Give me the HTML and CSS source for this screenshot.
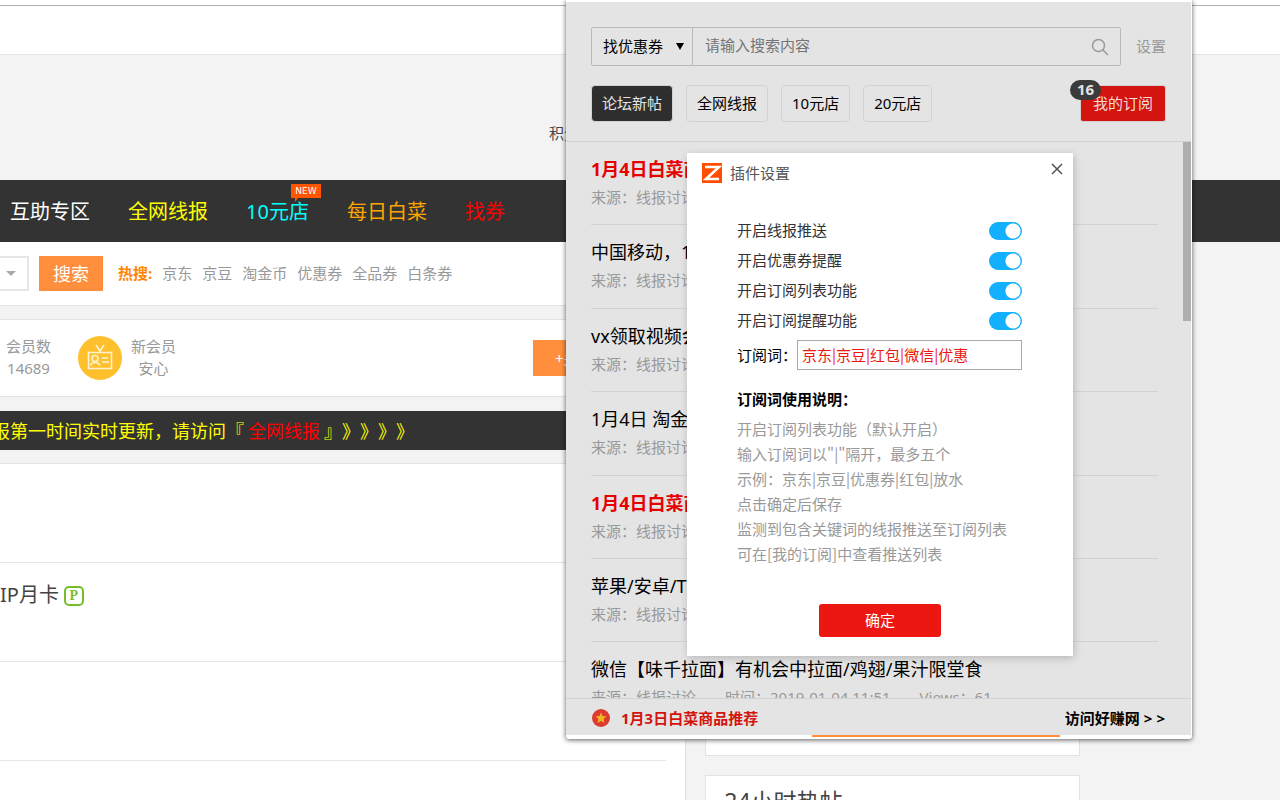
FILE: index.html
```html
<!DOCTYPE html>
<html lang="zh-CN">
<head>
<meta charset="utf-8">
<meta name="viewport" content="width=device-width, initial-scale=1">
<title>插件设置</title>
<link rel="stylesheet" href="styles.css">
</head>
<body>
<div class="page">
  <div class="topbar"></div>
  <header class="masthead"><span class="points">积分</span></header>
  <nav class="nav">
    <a href="#">互助专区</a>
    <a href="#" class="yellow">全网线报</a>
    <a href="#" class="cyan">10元店<span class="new"><svg viewBox="0 0 30 18" aria-hidden="true"><path d="M0 0h30v14H7l-3 4V14H0z" fill="#ff5400"/></svg><b>NEW</b></span></a>
    <a href="#" class="orange">每日白菜</a>
    <a href="#" class="red">找券</a>
  </nav>
  <section class="search-row">
    <button class="type-drop" aria-label="搜索类型"><svg viewBox="0 0 10 5" aria-hidden="true"><path d="M0 0h10L5 5z" fill="#aaa"/></svg></button>
    <button class="search-btn">搜索</button>
    <div class="hot"><b>热搜:</b><a href="#">京东</a><a href="#">京豆</a><a href="#">淘金币</a><a href="#">优惠券</a><a href="#">全品券</a><a href="#">白条券</a></div>
  </section>
  <section class="stats">
    <div class="stat"><span>会员数</span><span>14689</span></div>
    <svg class="card-icon" viewBox="0 0 44 44" aria-hidden="true"><circle cx="22" cy="22" r="22" fill="#ffc02e"/><g fill="none" stroke="#fff3cf" stroke-width="1.6"><path d="M18 9l4 6 4-6M10.500 16.500h23v16h-23z"/><circle cx="17" cy="22.500" r="3"/><path d="M12.500 29.500c1-4 8-4 9.500 0M24 22h6M24 26h7"/></g></svg>
    <div class="stat"><span>新会员</span><span>安心</span></div>
    <button class="follow">+关注</button>
  </section>
  <section class="banner">报第一时间实时更新，请访问『 <a href="#">全网线报</a> 』》》》》</section>
  <div class="columns">
    <main class="posts">
      <div class="post"></div>
      <div class="post"><a href="#">IP月卡</a><span class="p-mark">P</span></div>
      <div class="post"></div>
    </main>
    <aside class="side">
      <div class="box first"></div>
      <div class="box"><h2>24小时热帖</h2></div>
    </aside>
  </div>
</div>

<div class="popup">
  <div class="panel">
    <div class="tools">
      <div class="find">
        <div class="find-box">
          <div class="select-wrap"><select aria-label="搜索范围"><option>找优惠券</option></select><span class="caret"></span></div>
          <input type="text" placeholder="请输入搜索内容" aria-label="请输入搜索内容">
          <button class="find-btn" aria-label="搜索"><svg viewBox="0 0 18 18" fill="none" stroke="#999" stroke-width="1.500" aria-hidden="true"><circle cx="7.500" cy="7.500" r="6"/><path d="M12 12l5 5"/></svg></button>
        </div>
        <a href="#" class="settings">设置</a>
      </div>
      <div class="tabs">
        <button class="tab active">论坛新帖</button>
        <button class="tab">全网线报</button>
        <button class="tab">10元店</button>
        <button class="tab">20元店</button>
        <button class="tab mine">我的订阅<span class="count">16</span></button>
      </div>
    </div>
    <div class="list-area">
      <ul class="list">
        <li><a href="#" class="hot-title">1月4日白菜商</a><p>来源：线报讨论</p></li>
        <li><a href="#">中国移动，1</a><p>来源：线报讨论</p></li>
        <li><a href="#">vx领取视频会</a><p>来源：线报讨论</p></li>
        <li><a href="#">1月4日 淘金</a><p>来源：线报讨论</p></li>
        <li><a href="#" class="hot-title">1月4日白菜商</a><p>来源：线报讨论</p></li>
        <li><a href="#">苹果/安卓/T</a><p>来源：线报讨论</p></li>
        <li><a href="#">微信【味千拉面】有机会中拉面/鸡翅/果汁限堂食</a><p><span>来源：线报讨论</span><span>时间：2019-01-04 11:51</span><span>Views：61</span></p></li>
      </ul>
      <div class="thumb"></div>
    </div>
    <footer class="foot">
      <svg viewBox="0 0 18 18" aria-hidden="true"><circle cx="9" cy="9" r="9" fill="#db3b30"/><path d="M9 3.500l1.600 3.600 3.900.4-2.900 2.600.8 3.900L9 12l-3.400 2 .8-3.900-2.900-2.600 3.900-.4z" fill="#f0b423"/></svg>
      <a href="#" class="pick">1月3日白菜商品推荐</a>
      <a href="#" class="visit">访问好赚网 <span>&gt;</span><span>&gt;</span></a>
    </footer>
  </div>
  <div class="strip"></div>

  <form class="dialog">
    <div class="dialog-head">
      <svg viewBox="0 0 20 20" aria-hidden="true"><path d="M0 0h20v20H0z" fill="#ff4e00"/><path d="M3 4h14L4 16h13" fill="none" stroke="#fff" stroke-width="2.600"/></svg>
      <h1>插件设置</h1>
      <button type="button" class="close" aria-label="关闭"><svg viewBox="0 0 12 12" stroke="#555" stroke-width="1.500" aria-hidden="true"><path d="M1 1l10 10M11 1L1 11"/></svg></button>
    </div>
    <div class="dialog-body">
      <label class="option">开启线报推送<input type="checkbox" checked></label>
      <label class="option">开启优惠券提醒<input type="checkbox" checked></label>
      <label class="option">开启订阅列表功能<input type="checkbox" checked></label>
      <label class="option">开启订阅提醒功能<input type="checkbox" checked></label>
      <div class="words"><label for="words">订阅词：</label><input id="words" type="text" value="京东|京豆|红包|微信|优惠"></div>
      <h2>订阅词使用说明：</h2>
      <p>开启订阅列表功能（默认开启）</p>
      <p>输入订阅词以"|"隔开，最多五个</p>
      <p>示例：京东|京豆|优惠券|红包|放水</p>
      <p>点击确定后保存</p>
      <p>监测到包含关键词的线报推送至订阅列表</p>
      <p>可在[我的订阅]中查看推送列表</p>
    </div>
    <button type="button" class="ok">确定</button>
  </form>
</div>
</body>
</html>
```
FILE: styles.css
```css
* { box-sizing: border-box; }
body {
  margin: 0;
  height: 100vh;
  overflow: hidden;
  position: relative;
  background: #f3f3f3;
  color: #444;
  font: 15px/22px "Noto Sans", "Noto Sans CJK SC", sans-serif;
}
a { color: inherit; text-decoration: none; }
button, input, select { font: inherit; color: inherit; margin: 0; padding: 0; border: 0; background: none; }
h1, h2, p, ul { margin: 0; padding: 0; font-size: inherit; list-style: none; }
svg { display: block; flex: none; }

.page { display: flow-root; height: 100%; overflow: hidden; background: linear-gradient(#fff 5px, #f3f3f3 5px); }
.topbar { height: 50px; margin-top: 5px; background: #fff; border-top: 1px solid #b0b0b0; border-bottom: 1px solid #e2e2e2; }
.masthead { height: 125px; padding: 67px 0 0 549px; }
.nav { height: 62px; padding: 2px 0 0 10px; background: #333; color: #fff; display: flex; gap: 38px; align-items: center; font-size: 20px; line-height: 28px; }
.nav a { position: relative; white-space: nowrap; }
.nav .yellow { color: #ff0; }
.nav .cyan { color: #0ff; }
.nav .orange { color: orange; }
.nav .red { color: #f00; }
.new { position: absolute; left: 45px; top: -14px; width: 30px; height: 18px; color: #fff; }
.new b { position: absolute; left: 0; right: 0; top: 0; text-align: center; font: 9px/14px "DejaVu Sans", sans-serif; }

.search-row, .stats { width: 84.4%; background: #fff; border-bottom: 1px solid #e2e2e2; display: flex; align-items: center; }
.search-row { height: 64px; }
.type-drop { width: 29px; height: 35px; border: 2px solid #e6e6e6; border-left: 0; padding-left: 6px; }
.type-drop svg { width: 10px; height: 5px; }
.search-btn { width: 64px; height: 35px; margin: 0 15px 0 10px; background: #ff8f3d; color: #fff; font-size: 18px; }
.hot { display: flex; gap: 10px; padding-bottom: 2px; color: #999; }
.hot b { color: #ff8400; }
.stats { height: 78px; margin-top: 13px; padding-left: 6px; border-top: 1px solid #e2e2e2; color: #999; }
.stat { display: flex; flex-direction: column; padding-bottom: 2px; text-align: center; }
.card-icon { width: 44px; height: 44px; margin: 0 9px 0 27px; }
.follow { width: 120px; height: 36px; margin-left: 357px; padding-left: 22px; text-align: left; background: #ff8f3d; color: #fff; }
.banner { width: 84.4%; height: 39px; margin-top: 14px; text-indent: -8px; background: #333; color: #ff0; font: 18px/38px "Noto Sans CJK SC", sans-serif; text-spacing-trim: space-all; font-kerning: none; white-space: nowrap; }
.banner a { color: #f00; }

.columns { display: flex; align-items: flex-start; margin-top: 13px; width: 84.4%; gap: 19px; }
.posts { flex: 1; height: 400px; background: #fff; border-top: 1px solid #e2e2e2; border-right: 1px solid #e2e2e2; padding-right: 19px; }
.post { height: 99px; border-bottom: 1px solid #e6e6e6; padding-top: 18px; display: flex; gap: 5px; font-size: 20px; line-height: 28px; }
.p-mark { width: 20px; height: 20px; margin-top: 5px; border: 2px solid #77bd2b; border-radius: 5px; color: #77bd2b; font: bold 14px/16px "Liberation Serif", serif; text-align: center; }
.side { width: 375px; display: flex; flex-direction: column; gap: 19px; }
.box { height: 120px; background: #fff; border: 1px solid #e2e2e2; padding: 8px 18px; }
.box.first { height: 293px; }
.box h2 { font-size: 23px; line-height: 34px; font-weight: normal; }

.popup { position: absolute; top: 0; right: 88px; width: 626px; background: #fff; padding: 2px 1px 0 0; border-radius: 0 0 3px 3px; box-shadow: 0 1px 5px rgba(0,0,0,.65); }
.panel { background: #e4e4e4; }
.tools { height: 140px; padding: 25px 25px 0; border-bottom: 1px solid #d2d2d2; }
.find { display: flex; align-items: center; }
.find-box { flex: 1; height: 39px; display: flex; border: 1px solid #b9b9b9; border-radius: 2px; }
.select-wrap { position: relative; width: 101px; border-right: 1px solid #b9b9b9; }
.select-wrap select { width: 100%; height: 100%; padding: 0 0 2px 11px; color: #000; appearance: none; }
.caret { position: absolute; right: 8px; top: 15px; border: 4px solid transparent; border-top: 7px solid #000; border-bottom: 0; pointer-events: none; }
.find-box input { flex: 1; min-width: 0; padding: 0 0 4px 12px; }
.find-box input::placeholder { color: #757575; }
.find-btn { width: 40px; padding-left: 11px; }
.find-btn svg { width: 18px; height: 18px; }
.settings { margin-left: 15px; padding-bottom: 2px; color: #999; }
.tabs { display: flex; gap: 13px; margin-top: 19px; }
.tab { height: 37px; padding: 0 10px 2px; border: 1px solid #d2d2d2; border-radius: 4px; color: #000; white-space: nowrap; }
.tab.active { background: #2e2e2e; color: #e4e4e4; }
.tab.mine { position: relative; margin-left: auto; padding: 0 12px 2px; background: #d4140e; color: #f0dada; border-radius: 3px; }
.count { position: absolute; left: -11px; top: -6px; width: 31px; height: 20px; border-radius: 10px; background: #3b3b3b; color: #e4e4e4; font-weight: bold; line-height: 19px; }

.list-area { height: 556px; display: flex; overflow: hidden; }
.list { flex: 1; margin: 0 25px; display: flex; flex-direction: column; }
.list li { flex: 0 0 15%; padding-top: 14px; border-bottom: 1px solid #d2d2d2; white-space: nowrap; }
.list a { display: block; color: #000; font-size: 18px; line-height: 26px; }
.list .hot-title { color: #e60000; font-weight: bold; }
.list p { display: flex; gap: 29px; margin-top: 4px; color: #999; }
.thumb { width: 8px; height: 179px; background: #aeaeae; }
.foot { height: 37px; padding: 1px 26px 0; border-top: 1px solid #d2d2d2; display: flex; align-items: center; font-weight: bold; }
.foot svg { width: 18px; height: 18px; }
.pick { margin-left: 11px; color: #d4140e; }
.visit { margin-left: auto; display: flex; gap: 4px; color: #000; }
.strip { height: 4px; }
.strip::before { content: ""; display: block; width: 248px; height: 2px; margin-left: 246px; background: #ff8f3d; }

.dialog { position: absolute; left: 121px; top: 153px; width: 386px; padding-bottom: 19px; background: #fff; box-shadow: 1px 2px 8px rgba(0,0,0,.2); }
.dialog-head { height: 63px; padding: 10px 10px 0 15px; display: flex; align-items: flex-start; gap: 8px; line-height: 20px; }
.dialog-head > svg { width: 20px; height: 20px; }
.dialog-head h1 { font-weight: normal; color: #555; }
.close { margin-left: auto; }
.close svg { width: 12px; height: 12px; }
.dialog-body { padding: 0 51px 0 50px; font-family: "Noto Sans CJK SC", sans-serif; }
.option { height: 30px; line-height: 28px; display: flex; align-items: flex-start; justify-content: space-between; color: #333; }
.option input { appearance: none; width: 33px; height: 18px; margin-top: 6px; border-radius: 9px; background: radial-gradient(circle at 24px 9px, #fff 7px, #12b0ff 8px); }
.words { height: 30px; margin-top: 4px; display: flex; align-items: center; color: #000; }
.words input { flex: 1; min-width: 0; height: 30px; padding: 0 0 2px 4px; border: 1px solid #a9a9a9; color: #eb1710; }
.dialog-body h2 { margin: 16px 0 5px; line-height: 25px; color: #000; }
.dialog-body p { line-height: 25px; color: #999; white-space: nowrap; }
.ok { display: block; width: 122px; height: 33px; margin: 38px auto 0; padding-bottom: 2px; border-radius: 3px; background: #eb1710; color: #fff; }
```
